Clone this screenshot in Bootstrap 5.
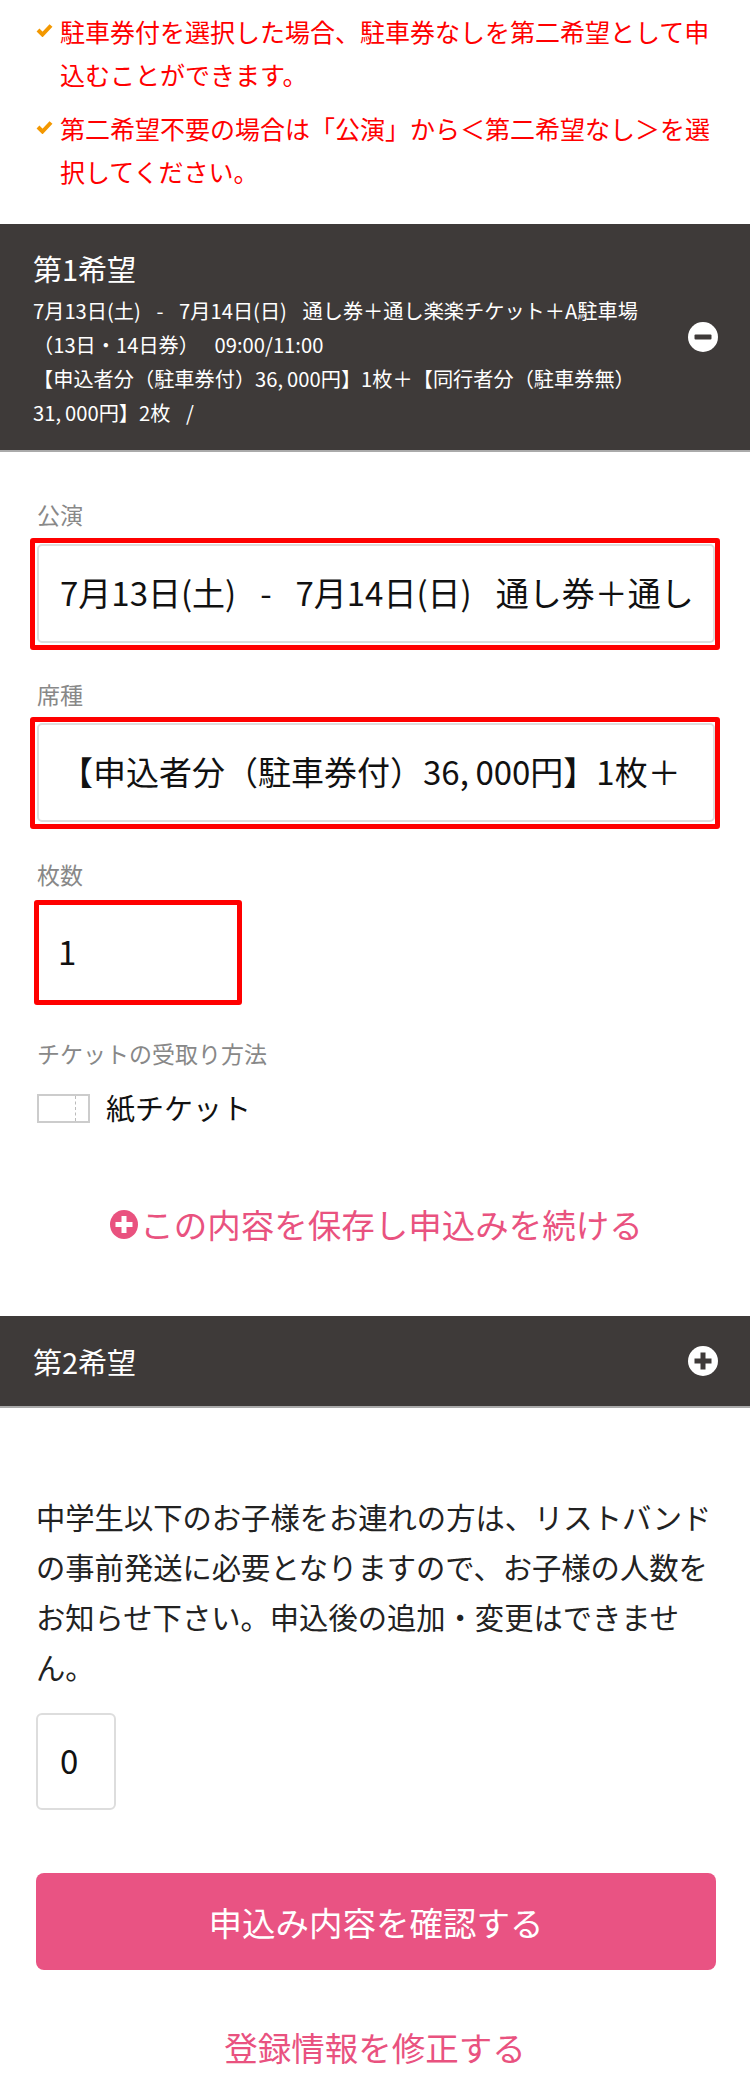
<!DOCTYPE html>
<html lang="ja">
<head>
<meta charset="utf-8">
<title>申込み</title>
<link rel="stylesheet" href="https://cdn.jsdelivr.net/npm/bootstrap@5.3.0/dist/css/bootstrap.min.css">
<style>
body{font-family:"Noto Sans CJK JP",sans-serif;background:#fff;color:#111}
.notes{padding:10px 30px 31px 36px;font-size:25px;line-height:43px;color:#f00;margin:0}
.notes li+li{margin-top:11px}
.notes .gap-2{gap:7px!important}
.tick{width:17px;height:14px;margin-top:13px;flex:none}
.acc-head{background:#3e3a39;color:#fff;border-bottom:2px solid #aaa;padding-left:33px;padding-right:32px}
.acc-one{height:228px}
.acc-one-text{padding-top:26px}
.acc-two{height:92px}
.acc-title{font-size:29px;line-height:36px}
.acc-detail{font-size:20.2px;line-height:34px;margin-top:8px;width:620px;word-spacing:.55em}
.acc-icon{width:30px;height:30px;flex:none}
.form-area{padding:47px 30px 0 37px}
.lbl{display:block;font-size:23px;line-height:30px;color:#888;margin:0}
.mark-box{border:5px solid #f00;border-radius:3px;margin-left:-7px;padding:1px 0 2px 2px;width:690px}
.mark-a{margin-top:9px}
.mark-c{margin-top:8px}
.gap-b{margin-top:29px}
.gap-c{margin-top:30px}
.gap-d{margin-top:33px}
.mark-n{margin-top:11px;margin-left:-3px;width:208px;height:105px;padding:0 0 4px 19px;display:flex;align-items:center}
.form-select.sel-plain,.form-control.num-plain{font-family:"Noto Sans CJK JP",sans-serif;font-size:33px;color:#111;box-shadow:none;word-spacing:.5em}
.form-select.sel-plain{background-image:none;height:99px;border:2px solid #ddd;border-radius:5px;padding:0 21px 3px 21px;background-color:#fff;line-height:44px}
.num-val{font-size:33px;line-height:44px}
.ticket-row{margin-top:19px;height:40px}
.ticket-box{width:53px;height:29px;border:2px solid #ccc;position:relative;margin-top:3px;background:#fff}
.ticket-box::after{content:"";position:absolute;top:0;bottom:0;left:36px;border-left:1px dashed #bbb}
.ticket-txt{font-size:29px;line-height:40px;margin-left:16px;color:#111}
.pink-link{color:#e9527f;font-size:33.500px;line-height:44px;text-decoration:none}
.save-link{margin-top:75px;margin-bottom:70px;margin-left:3px}
.save-ico{width:28px;height:29px;margin-right:2px}
.para{padding:83px 30px 0 36px;font-size:29.300px;line-height:50px;color:#222;margin:0}
.form-control.num-plain{width:80px;height:97px;margin:22px 0 0 36px;border:2px solid #ddd;border-radius:6px;padding:0 0 4px 22px}
.go-btn{display:block;margin:63px 34px 0 36px;height:97px;width:680px;background:#e95383;border:0;border-radius:8px;color:#fff;font-size:33.500px;line-height:97px;padding:0}
.back-link{margin-top:55px}
</style>
</head>
<body>
<ul class="notes list-unstyled">
  <li class="d-flex gap-2"><svg class="tick" viewBox="0 0 17 14"><path d="M2 7l4.500 4.500L15 2.500" fill="none" stroke="#f39800" stroke-width="4"/></svg><span>駐車券付を選択した場合、駐車券なしを第二希望として申込むことができます。</span></li>
  <li class="d-flex gap-2"><svg class="tick" viewBox="0 0 17 14"><path d="M2 7l4.500 4.500L15 2.500" fill="none" stroke="#f39800" stroke-width="4"/></svg><span>第二希望不要の場合は「公演」から＜第二希望なし＞を選択してください。</span></li>
</ul>

<div class="acc-head acc-one d-flex justify-content-between align-items-center">
  <div class="acc-one-text align-self-start">
    <div class="acc-title">第1希望</div>
    <div class="acc-detail">7月13日(土) - 7月14日(日) 通し券＋通し楽楽チケット＋A駐車場（13日・14日券） 09:00/11:00<br>【申込者分（駐車券付）36,&#8201;000円】1枚＋【同行者分（駐車券無）31,&#8201;000円】2枚 /</div>
  </div>
  <svg class="acc-icon" viewBox="0 0 30 30"><circle cx="15" cy="15" r="15" fill="#fff"/><rect x="6.500" y="12.500" width="17" height="5" rx="1" fill="#3e3a39"/></svg>
</div>

<div class="form-area">
  <label class="lbl">公演</label>
  <div class="mark-box mark-a">
    <select class="form-select sel-plain"><option>7月13日(土) - 7月14日(日) 通し券＋通し楽楽チケット＋A駐車場（13日・14日券） 09:00/11:00</option></select>
  </div>
  <label class="lbl gap-b">席種</label>
  <div class="mark-box mark-c">
    <select class="form-select sel-plain"><option>【申込者分（駐車券付）36,&#8201;000円】1枚＋【同行者分（駐車券無）31,&#8201;000円】2枚</option></select>
  </div>
  <label class="lbl gap-c">枚数</label>
  <div class="mark-box mark-n"><span class="num-val">1</span></div>
  <label class="lbl gap-d">チケットの受取り方法</label>
  <div class="ticket-row d-flex align-items-center">
    <span class="ticket-box"></span>
    <span class="ticket-txt">紙チケット</span>
  </div>
</div>

<div class="save-link text-center">
  <a class="pink-link d-inline-flex align-items-center" href="#"><svg class="save-ico" viewBox="0 0 28 29"><ellipse cx="14" cy="14.500" rx="14" ry="14.500" fill="#e9527f"/><path d="M11.500 6h5v6h6v5h-6v6h-5v-6h-6v-5h6z" fill="#fff"/></svg>この内容を保存し申込みを続ける</a>
</div>

<div class="acc-head acc-two d-flex justify-content-between align-items-center">
  <div class="acc-title">第2希望</div>
  <svg class="acc-icon" viewBox="0 0 30 30"><circle cx="15" cy="15" r="15" fill="#fff"/><path d="M12.500 6.500h5v6h6v5h-6v6h-5v-6h-6v-5h6z" fill="#3e3a39"/></svg>
</div>

<p class="para">中学生以下のお子様をお連れの方は、リストバンドの事前発送に必要となりますので、お子様の人数をお知らせ下さい。申込後の追加・変更はできません。</p>
<input class="form-control num-plain" type="text" value="0">
<button class="go-btn" type="button">申込み内容を確認する</button>
<div class="back-link text-center"><a class="pink-link" href="#">登録情報を修正する</a></div>

<script src="https://cdn.jsdelivr.net/npm/bootstrap@5.3.0/dist/js/bootstrap.bundle.min.js"></script>
</body>
</html>
